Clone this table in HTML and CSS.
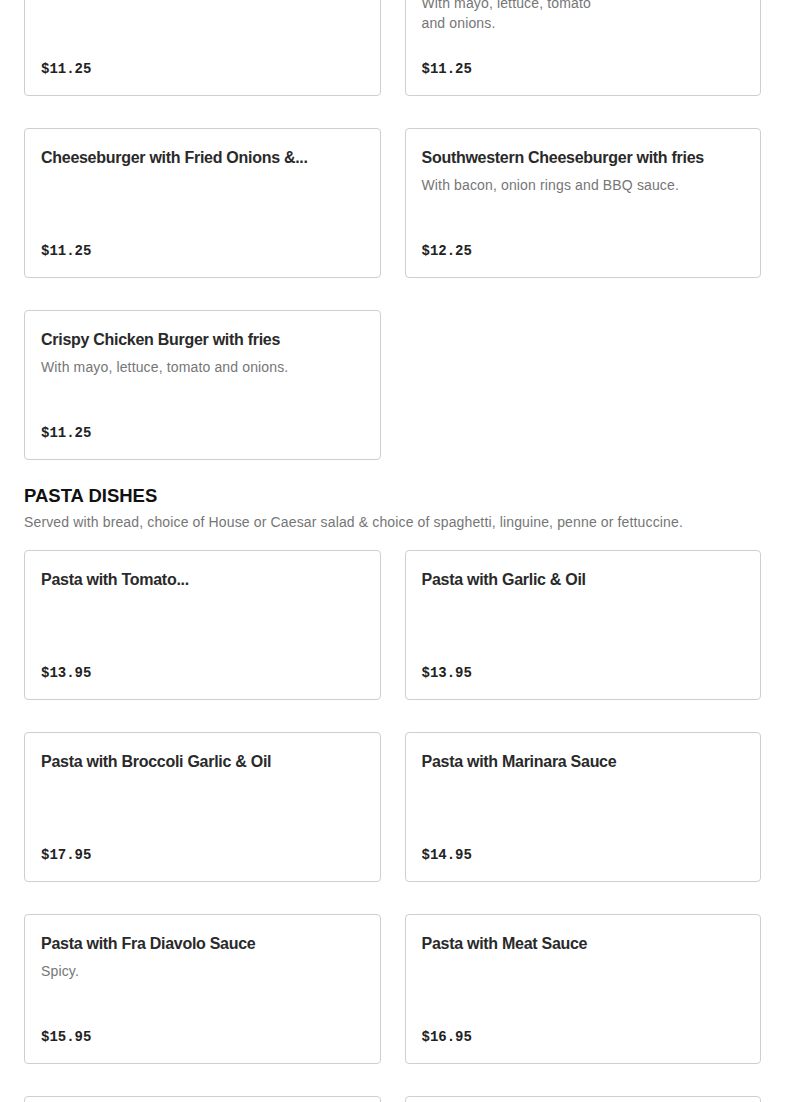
FILE: index.html
```html
<!DOCTYPE html>
<html lang="en">
<head>
<meta charset="utf-8">
<title>Menu</title>
<link rel="stylesheet" href="styles.css">
</head>
<body>
<main class="menu">
  <section class="section section-burgers">
    <div class="grid">
      <div class="card">
        <div class="title">Bacon Cheeseburger with fries</div>
        <div class="price">$11.25</div>
      </div>
      <div class="card">
        <div class="title">Chicken Burger with fries</div>
        <div class="desc desc-narrow">With mayo, lettuce, tomato and onions.</div>
        <div class="price">$11.25</div>
      </div>
      <div class="card">
        <div class="title">Cheeseburger with Fried Onions &amp;...</div>
        <div class="price">$11.25</div>
      </div>
      <div class="card">
        <div class="title">Southwestern Cheeseburger with fries</div>
        <div class="desc">With bacon, onion rings and BBQ sauce.</div>
        <div class="price">$12.25</div>
      </div>
      <div class="card">
        <div class="title">Crispy Chicken Burger with fries</div>
        <div class="desc">With mayo, lettuce, tomato and onions.</div>
        <div class="price">$11.25</div>
      </div>
    </div>
  </section>

  <section class="section">
    <h2 class="section-title">PASTA DISHES</h2>
    <p class="section-sub">Served with bread, choice of House or Caesar salad &amp; choice of spaghetti, linguine, penne or fettuccine.</p>
    <div class="grid">
      <div class="card">
        <div class="title">Pasta with Tomato...</div>
        <div class="price">$13.95</div>
      </div>
      <div class="card">
        <div class="title">Pasta with Garlic &amp; Oil</div>
        <div class="price">$13.95</div>
      </div>
      <div class="card">
        <div class="title">Pasta with Broccoli Garlic &amp; Oil</div>
        <div class="price">$17.95</div>
      </div>
      <div class="card">
        <div class="title">Pasta with Marinara Sauce</div>
        <div class="price">$14.95</div>
      </div>
      <div class="card">
        <div class="title">Pasta with Fra Diavolo Sauce</div>
        <div class="desc">Spicy.</div>
        <div class="price">$15.95</div>
      </div>
      <div class="card">
        <div class="title">Pasta with Meat Sauce</div>
        <div class="price">$16.95</div>
      </div>
      <div class="card">
        <div class="title">Pasta with Vodka Sauce</div>
        <div class="price">$16.95</div>
      </div>
      <div class="card">
        <div class="title">Pasta Alfredo</div>
        <div class="price">$16.95</div>
      </div>
    </div>
  </section>
</main>
</body>
</html>
```

FILE: styles.css
```css
html, body {
  margin: 0;
  padding: 0;
  background: #ffffff;
}

body {
  font-family: "Liberation Sans", Arial, sans-serif;
  color: #2b2b2b;
  overflow: hidden;
}

.menu {
  padding: 0 24px;
  margin-top: -54px;
}

.section + .section {
  margin-top: 24px;
}

.grid {
  display: grid;
  grid-template-columns: 1fr 1fr;
  column-gap: 24px;
  row-gap: 32px;
}

.card {
  box-sizing: border-box;
  height: 150px;
  border: 1px solid #cfcfcf;
  border-radius: 4px;
  padding: 17px 16px 16px 16px;
  display: flex;
  flex-direction: column;
}

.title {
  font-family: "Liberation Sans", Arial, sans-serif;
  font-weight: 700;
  font-size: 16px;
  line-height: 24px;
  letter-spacing: -0.28px;
  color: #2a2a2a;
  white-space: nowrap;
  overflow: hidden;
  text-overflow: ellipsis;
}

.desc {
  margin-top: 5px;
  font-size: 14px;
  line-height: 20px;
  letter-spacing: 0.14px;
  color: #767676;
}

.desc-narrow {
  max-width: 185px;
}

.price {
  margin-top: auto;
  font-family: "Liberation Mono", "Courier New", monospace;
  font-weight: 700;
  font-size: 14px;
  line-height: 20px;
  color: #222222;
}

.section-title {
  margin: 0;
  font-family: "Liberation Sans", Arial, sans-serif;
  font-weight: 700;
  font-size: 18.5px;
  line-height: 24px;
  color: #111111;
}

.section-sub {
  margin: 4px 0 18px;
  font-size: 14px;
  line-height: 20px;
  letter-spacing: 0.14px;
  color: #767676;
}
```
